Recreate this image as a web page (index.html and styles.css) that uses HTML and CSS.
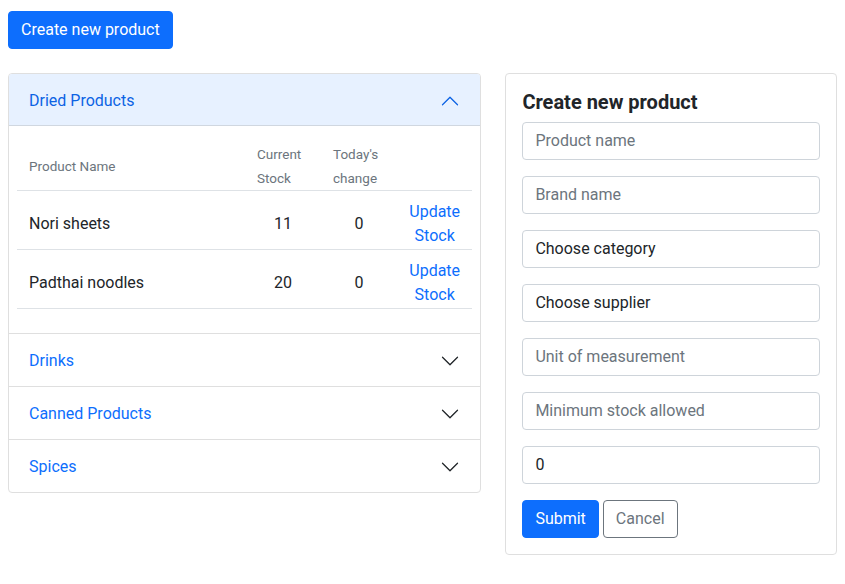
FILE: index.html
```html
<!DOCTYPE html>
<html>
<head>
<meta charset="utf-8">
<link rel="stylesheet" href="styles.css">
</head>
<body>
<div class="top">
  <button class="btn btn-primary">Create new product</button>
</div>
<div class="layout">
  <div class="accordion">
    <div class="acc-item">
      <div class="acc-head open">
        <span>Dried Products</span>
        <svg class="chev" viewBox="0 0 16 16" width="20" height="20"><path fill="#0c63e4" fill-rule="evenodd" d="M1.646 4.646a.5.5 0 0 1 .708 0L8 10.293l5.646-5.647a.5.5 0 0 1 .708.708l-6 6a.5.5 0 0 1-.708 0l-6-6a.5.5 0 0 1 0-.708z" transform="rotate(180 8 8)"/></svg>
      </div>
      <div class="acc-body">
        <table class="tbl">
          <colgroup><col class="c1"><col class="c2"><col class="c3"><col class="c4"></colgroup>
          <thead>
            <tr><th>Product Name</th><th>Current Stock</th><th>Today's change</th><th></th></tr>
          </thead>
          <tbody>
            <tr><td>Nori sheets</td><td class="num">11</td><td class="num">0</td><td class="act"><a class="link">Update Stock</a></td></tr>
            <tr><td>Padthai noodles</td><td class="num">20</td><td class="num">0</td><td class="act"><a class="link">Update Stock</a></td></tr>
          </tbody>
        </table>
      </div>
    </div>
    <div class="acc-item">
      <div class="acc-head">
        <span>Drinks</span>
        <svg class="chev" viewBox="0 0 16 16" width="20" height="20"><path fill="#212529" fill-rule="evenodd" d="M1.646 4.646a.5.5 0 0 1 .708 0L8 10.293l5.646-5.647a.5.5 0 0 1 .708.708l-6 6a.5.5 0 0 1-.708 0l-6-6a.5.5 0 0 1 0-.708z"/></svg>
      </div>
    </div>
    <div class="acc-item">
      <div class="acc-head">
        <span>Canned Products</span>
        <svg class="chev" viewBox="0 0 16 16" width="20" height="20"><path fill="#212529" fill-rule="evenodd" d="M1.646 4.646a.5.5 0 0 1 .708 0L8 10.293l5.646-5.647a.5.5 0 0 1 .708.708l-6 6a.5.5 0 0 1-.708 0l-6-6a.5.5 0 0 1 0-.708z"/></svg>
      </div>
    </div>
    <div class="acc-item">
      <div class="acc-head">
        <span>Spices</span>
        <svg class="chev" viewBox="0 0 16 16" width="20" height="20"><path fill="#212529" fill-rule="evenodd" d="M1.646 4.646a.5.5 0 0 1 .708 0L8 10.293l5.646-5.647a.5.5 0 0 1 .708.708l-6 6a.5.5 0 0 1-.708 0l-6-6a.5.5 0 0 1 0-.708z"/></svg>
      </div>
    </div>
  </div>
  <div class="card">
    <h2 class="card-title">Create new product</h2>
    <input class="field" placeholder="Product name">
    <input class="field" placeholder="Brand name">
    <div class="field value">Choose category</div>
    <div class="field value">Choose supplier</div>
    <input class="field" placeholder="Unit of measurement">
    <input class="field" placeholder="Minimum stock allowed">
    <input class="field" value="0">
    <div class="actions">
      <button class="btn btn-primary">Submit</button>
      <button class="btn btn-outline">Cancel</button>
    </div>
  </div>
</div>
</body>
</html>
```
FILE: styles.css
```css
* { box-sizing: border-box; }
body {
  margin: 0;
  padding: 11px 8px 0 8px;
  font-family: Roboto, "Liberation Sans", sans-serif;
  font-size: 16px;
  line-height: 1.5;
  color: #212529;
  background: #fff;
}
.top { height: 62px; }
.btn {
  font-family: inherit;
  font-size: 16px;
  line-height: 24px;
  padding: 6px 12px;
  border-radius: 4px;
  border: 1px solid transparent;
  cursor: pointer;
}
.btn-primary { background: #0d6efd; border-color: #0d6efd; color: #fff; }
.btn-outline { background: #fff; border-color: #6c757d; color: #6c757d; }
.layout { display: flex; align-items: flex-start; gap: 24px; }
.accordion {
  width: 474px;
  border: 1px solid #dfdfdf;
  border-radius: 4px;
  overflow: hidden;
}
.acc-item + .acc-item { border-top: 1px solid #dfdfdf; }
.acc-head {
  height: 52px;
  padding: 1px 20px 0;
  display: flex;
  align-items: center;
  justify-content: space-between;
  color: #0d6efd;
}
.acc-head.open {
  background: #e7f1ff;
  color: #0c63e4;
  padding-top: 3px;
  border-bottom: 1px solid #d0d7e0;
}
.chev { display: block; }
.acc-body { padding: 8px 8px 24px; }
.tbl { width: 100%; border-collapse: collapse; }
.c1 { width: 228px; }
.c2 { width: 76px; }
.c3 { width: 76px; }
.tbl th {
  text-align: left;
  font-weight: 400;
  font-size: 13.5px;
  line-height: 24px;
  color: #6c757d;
  padding: 8px 12px 0;
  border-bottom: 1px solid #dee2e6;
  vertical-align: middle;
}
.tbl td {
  height: 59px;
  padding: 7px 12px 0;
  border-bottom: 1px solid #dee2e6;
  vertical-align: middle;
}
.tbl td.num { text-align: center; padding: 7px 0 0; }
.tbl td.act { text-align: center; padding: 9px 0 0; vertical-align: top; }
.link { color: #0d6efd; display: inline-block; width: 52px; line-height: 24px; }
.card {
  width: 332px;
  border: 1px solid #dfdfdf;
  border-radius: 4px;
  padding: 16px;
}
.card-title {
  margin: 0 0 8px;
  font-size: 20px;
  line-height: 24px;
  font-weight: 700;
}
.field {
  display: block;
  width: 100%;
  height: 38px;
  margin: 0 0 16px;
  padding: 5px 12px 7px;
  font-family: inherit;
  font-size: 16px;
  line-height: 24px;
  color: #212529;
  background: #fff;
  border: 1px solid #ced4da;
  border-radius: 4px;
  outline: none;
}
.field.value { padding: 6px 12px; }
.field::placeholder { color: #6c757d; opacity: 1; }
.actions { display: flex; gap: 4px; }
```
